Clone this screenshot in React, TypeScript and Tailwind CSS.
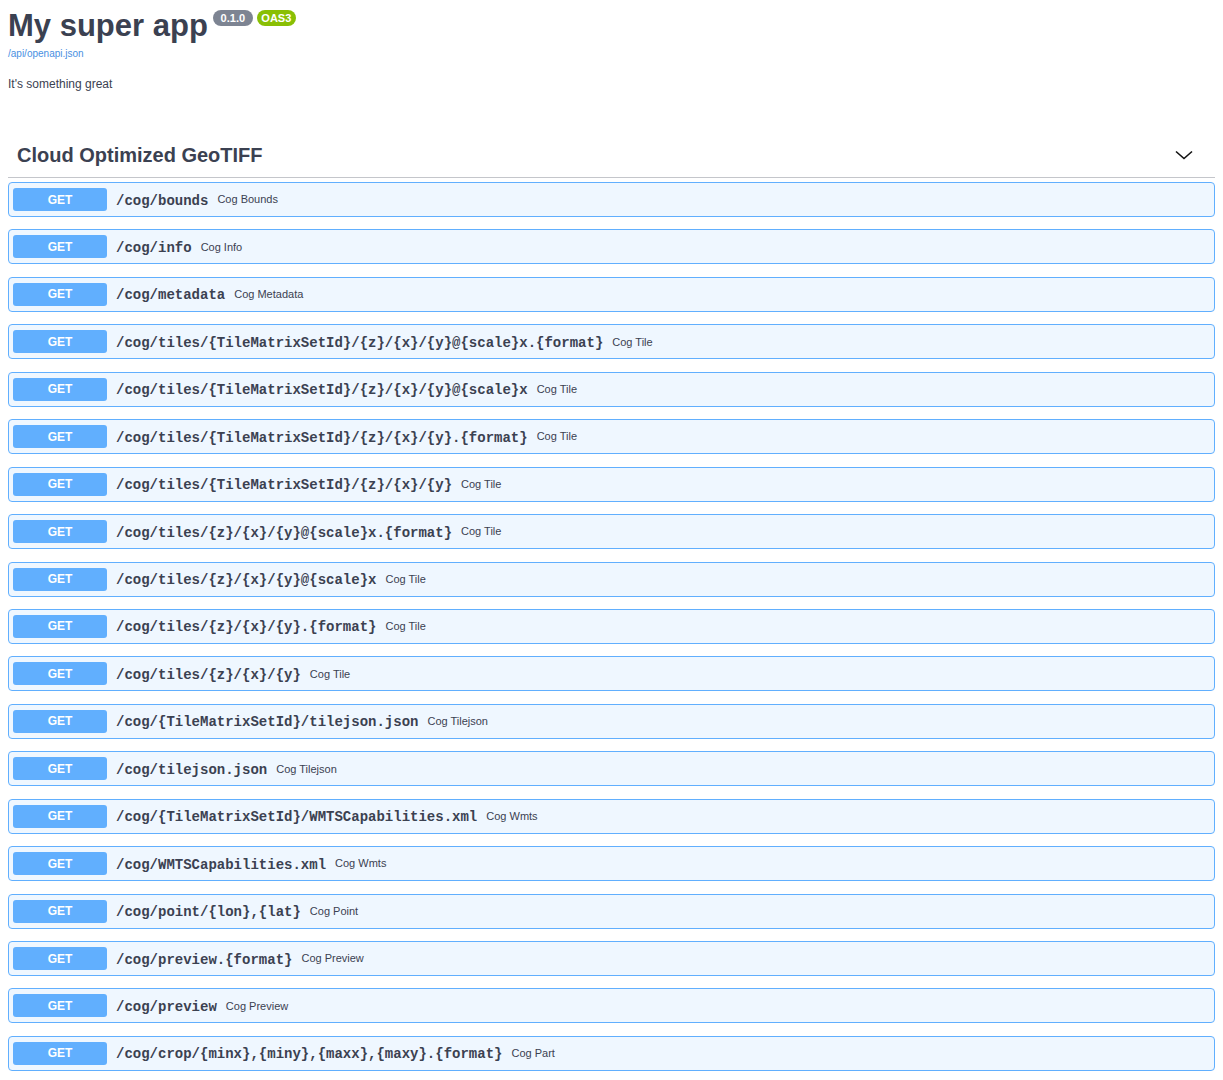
import React from 'react'

type Route = {
    path: string
    summary: string
}

const routes: Route[] = [
    { path: '/cog/bounds', summary: 'Cog Bounds' },
    { path: '/cog/info', summary: 'Cog Info' },
    { path: '/cog/metadata', summary: 'Cog Metadata' },
    { path: '/cog/tiles/{TileMatrixSetId}/{z}/{x}/{y}@{scale}x.{format}', summary: 'Cog Tile' },
    { path: '/cog/tiles/{TileMatrixSetId}/{z}/{x}/{y}@{scale}x', summary: 'Cog Tile' },
    { path: '/cog/tiles/{TileMatrixSetId}/{z}/{x}/{y}.{format}', summary: 'Cog Tile' },
    { path: '/cog/tiles/{TileMatrixSetId}/{z}/{x}/{y}', summary: 'Cog Tile' },
    { path: '/cog/tiles/{z}/{x}/{y}@{scale}x.{format}', summary: 'Cog Tile' },
    { path: '/cog/tiles/{z}/{x}/{y}@{scale}x', summary: 'Cog Tile' },
    { path: '/cog/tiles/{z}/{x}/{y}.{format}', summary: 'Cog Tile' },
    { path: '/cog/tiles/{z}/{x}/{y}', summary: 'Cog Tile' },
    { path: '/cog/{TileMatrixSetId}/tilejson.json', summary: 'Cog Tilejson' },
    { path: '/cog/tilejson.json', summary: 'Cog Tilejson' },
    { path: '/cog/{TileMatrixSetId}/WMTSCapabilities.xml', summary: 'Cog Wmts' },
    { path: '/cog/WMTSCapabilities.xml', summary: 'Cog Wmts' },
    { path: '/cog/point/{lon},{lat}', summary: 'Cog Point' },
    { path: '/cog/preview.{format}', summary: 'Cog Preview' },
    { path: '/cog/preview', summary: 'Cog Preview' },
    { path: '/cog/crop/{minx},{miny},{maxx},{maxy}.{format}', summary: 'Cog Part' },
]

function OpBlock({ route }: { route: Route }) {
    return (
        <div className="h-[35px] flex items-center pl-[4px] border border-[#61affe] bg-[#eff7ff] rounded-[4px]">
            <span className="w-[94px] h-[23px] flex items-center justify-center bg-[#61affe] rounded-[3px] text-white text-[12px] font-bold">
                GET
            </span>
            <span className="ml-[9px] pt-[3px] text-[14px] font-bold text-[#3b4151] font-['Liberation_Mono',monospace] whitespace-nowrap">
                {route.path}
            </span>
            <span className="ml-[9px] text-[11px] text-[#3b4151] whitespace-nowrap">{route.summary}</span>
        </div>
    )
}

export default function App() {
    return (
        <div className="min-h-screen bg-white px-[8px] font-['Liberation_Sans',Arial,sans-serif] text-[#3b4151]">
            <div className="pt-[8px]">
                <div className="flex items-start">
                    <h1 className="text-[31px] leading-[36px] font-bold">My super app</h1>
                    <span className="ml-[5px] mt-[2px] h-[16px] w-[40px] flex items-center justify-center rounded-full bg-[#7d8492] text-white text-[11px] font-bold">
                        0.1.0
                    </span>
                    <span className="ml-[4px] mt-[2px] h-[16px] w-[39px] flex items-center justify-center rounded-full bg-[#89bf04] text-white text-[11px] font-bold">
                        OAS3
                    </span>
                </div>
                <a className="block text-[10px] leading-[12px] mt-[4px] text-[#4990e2]">/api/openapi.json</a>
                <p className="mt-[17px] text-[12px] leading-[14px]">It's something great</p>
            </div>

            <div className="mt-[42px]">
                <div className="h-[45px] flex items-center justify-between pl-[9px] pr-[22px] border-b border-[#c4c6cb]">
                    <h2 className="text-[20px] font-bold">Cloud Optimized GeoTIFF</h2>
                    <svg width="18" height="10" viewBox="0 0 18 10" fill="none">
                        <path d="M1 1.5 L9 8.5 L17 1.5" stroke="#111" strokeWidth="1.6" />
                    </svg>
                </div>
                <div className="mt-[4px] flex flex-col gap-[12.44px]">
                    {routes.map((r, i) => (
                        <OpBlock key={i} route={r} />
                    ))}
                </div>
            </div>
        </div>
    )
}
